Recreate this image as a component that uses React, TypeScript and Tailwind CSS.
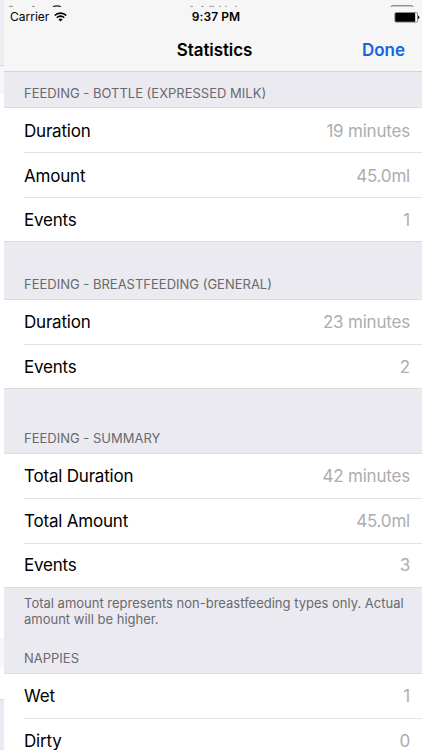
import clsx from "clsx";

type Row = { label: string; value: string };

const bottle: Row[] = [
  { label: "Duration", value: "19 minutes" },
  { label: "Amount", value: "45.0ml" },
  { label: "Events", value: "1" },
];

const breastfeeding: Row[] = [
  { label: "Duration", value: "23 minutes" },
  { label: "Events", value: "2" },
];

const summary: Row[] = [
  { label: "Total Duration", value: "42 minutes" },
  { label: "Total Amount", value: "45.0ml" },
  { label: "Events", value: "3" },
];

const nappies: Row[] = [
  { label: "Wet", value: "1" },
  { label: "Dirty", value: "0" },
];

// tops of the status bar icons of the screen underneath
function PeekingStatusBar() {
  return (
    <svg className="shrink-0" width="418" height="7" viewBox="0 0 418 7" fill="none">
      <path d="M5 6.4h4M28 6.4h3" stroke="#777" strokeWidth="0.8" />
      <path d="M49 6.8q4-2 8 0" stroke="#222" strokeWidth="1.2" />
      <path d="M186 6.4h3M197 6.4h3M205 6.4h5M215 6.4h2M221 6.4h2M231 6.4h2" stroke="#999" strokeWidth="0.9" />
      <path d="M387 6.8q0-1 1.5-1h19q1.5 0 1.5 1" stroke="#555" strokeWidth="0.9" />
    </svg>
  );
}

function StatusBar() {
  return (
    <div className="grid h-[20px] shrink-0 grid-cols-[1fr_auto_1fr] items-center text-[12px] leading-[20px] text-black">
      <div className="flex items-center pl-[6px]">
        <span>Carrier</span>
        <svg className="ml-[5px]" width="13" height="10" viewBox="0 0 13 10" fill="none" stroke="#000" strokeWidth="1.6">
          <path d="M0.7 3.5a8.2 8.2 0 0 1 11.6 0" />
          <path d="M2.8 5.7a5.2 5.2 0 0 1 7.4 0" />
          <path d="M6.5 9.6L4.5 7.5a2.8 2.8 0 0 1 4 0z" fill="#000" stroke="none" />
        </svg>
      </div>
      <span className="pl-[6px] font-semibold tracking-[0.1px]">9:37 PM</span>
      <div className="flex justify-end pr-[2px]">
        <svg width="26" height="11" viewBox="0 0 26 11">
          <rect x="0.9" y="0.5" width="22.6" height="9.6" rx="1.3" fill="#fff" stroke="#555" strokeWidth="0.7" />
          <rect x="1.2" y="0.9" width="20" height="8.8" rx="0.8" fill="#000" />
          <path d="M24.1 3.4c1.7.5 1.7 3.3 0 3.8z" fill="#000" />
        </svg>
      </div>
    </div>
  );
}

function SectionHeader({ title, className }: { title: string; className: string }) {
  return (
    <div className={clsx("flex shrink-0 items-end border-b border-[#dcdce0] bg-[#ebeaf0] pl-[20px] text-[13px] leading-[16px] text-[#69696e]", className)}>
      <h2>{title}</h2>
    </div>
  );
}

function Rows({ rows, className }: { rows: Row[]; className: string }) {
  return (
    <ul className={clsx("shrink-0 border-b border-[#dcdce0] bg-white pl-[20px]", className)}>
      {rows.map((row, i) => (
        <li
          key={row.label}
          className={clsx(
            "flex h-[44.4px] items-center justify-between pr-[12px] text-[17px] leading-[20px] tracking-[-0.2px]",
            i > 0 && "border-t border-[#e3e3e5]",
          )}
        >
          <span className="text-black">{row.label}</span>
          <span className="text-[#adadb0]">{row.value}</span>
        </li>
      ))}
    </ul>
  );
}

// the screen underneath, still showing along the left edge
function BackScreen() {
  return (
    <div className="flex w-[4px] shrink-0 flex-col bg-white">
      <div className="h-[66px] border-b border-[#d5d5da] bg-[#ededf4]" />
      <div className="h-[28px] bg-[#f7f7f7]" />
      <div className="h-[544px]" />
      <div className="h-[29px] bg-[#f7f7f7]" />
      <div className="h-[32px]" />
      <div className="flex-1 border-t border-[#d5d5da] bg-[#ebeaf2]" />
    </div>
  );
}

export default function App() {
  return (
    <div className="flex h-[750px] w-[422px] overflow-hidden bg-white font-[Inter,sans-serif]">
      <BackScreen />
      <main className="flex min-w-0 flex-1 flex-col overflow-hidden">
        <header className="flex h-[72px] shrink-0 flex-col border-b border-[#d2d2d7] bg-[#f6f6f7]">
          <PeekingStatusBar />
          <StatusBar />
          <div className="grid flex-1 grid-cols-[1fr_auto_1fr] items-center pt-px text-[17px] leading-[20px]">
            <span />
            <h1 className="pl-[3px] font-semibold tracking-[-0.1px] text-black">Statistics</h1>
            <button className="justify-self-end pr-[17px] font-semibold text-[#1665e0]">Done</button>
          </div>
        </header>
        <SectionHeader title="FEEDING - BOTTLE (EXPRESSED MILK)" className="h-[36px] pb-[6px]" />
        <Rows rows={bottle} className="h-[134px] *:pt-px" />
        <SectionHeader title="FEEDING - BREASTFEEDING (GENERAL)" className="h-[58px] pb-[7px]" />
        <Rows rows={breastfeeding} className="h-[89px] *:pb-px" />
        <SectionHeader title="FEEDING - SUMMARY" className="h-[65px] pb-[7px]" />
        <Rows rows={summary} className="h-[134px] *:pb-px" />
        <p className="shrink-0 bg-[#ebeaf0] pt-[7px] pl-[20px] text-[13px] leading-[16px] text-[#69696e]">
          Total amount represents non-breastfeeding types only. Actual
          <br />
          amount will be higher.
        </p>
        <SectionHeader title="NAPPIES" className="h-[47px] pb-[7px]" />
        <Rows rows={nappies} className="h-[89px] *:pb-px" />
      </main>
    </div>
  );
}
